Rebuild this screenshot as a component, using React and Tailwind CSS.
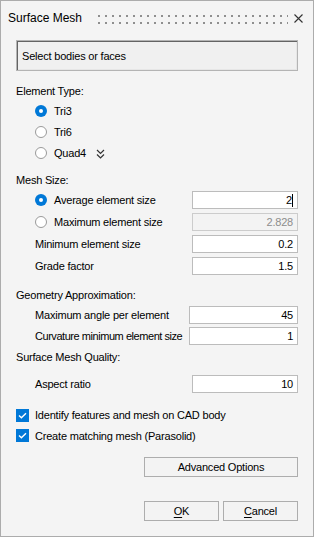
import { useState } from 'react';

const Radio = ({ checked }) => (
  <span
    className={
      checked
        ? 'w-[12px] h-[12px] rounded-full bg-[#0078d7] flex items-center justify-center shrink-0'
        : 'w-[12px] h-[12px] rounded-full border border-[#9a9a9a] bg-white shrink-0'
    }
  >
    {checked && <span className="w-[4px] h-[4px] rounded-full bg-white" />}
  </span>
);

const Check = () => (
  <span className="w-[13px] h-[13px] bg-[#0078d7] flex items-center justify-center shrink-0">
    <svg width="9" height="7" viewBox="0 0 9 7" fill="none">
      <path d="M1 3.5 L3.4 5.8 L8 1.2" stroke="white" strokeWidth="1.4" />
    </svg>
  </span>
);

const Field = ({ value, width = 'w-[106px]', disabled, caret }) => (
  <div
    className={
      'h-[18px] border flex items-center justify-end pr-[4px] shrink-0 ' +
      width +
      (disabled ? ' bg-[#f3f3f3] border-[#cccccc] text-[#8d8d8d]' : ' bg-white border-[#bcbcbc] text-black')
    }
  >
    <span>{value}</span>
    {caret && <span className="w-px h-[13px] bg-black" />}
  </div>
);

const Row = ({ h, label, indent = 'pl-[19px]', children }) => (
  <div className={'flex items-center justify-between ' + h}>
    <span className={'whitespace-nowrap ' + indent}>{label}</span>
    {children}
  </div>
);

const TitleDots = () => (
  <svg width="190" height="9" className="shrink-0">
    <defs>
      <pattern id="dots" width="7" height="7" patternUnits="userSpaceOnUse">
        <rect x="0" y="0" width="2" height="2" fill="#8f8f8f" />
      </pattern>
    </defs>
    <rect x="0" y="0" width="190" height="9" fill="url(#dots)" />
  </svg>
);

export default function App() {
  const [sel] = useState('tri3');
  return (
    <div className="w-[314px] h-[537px] bg-[#f4f4f4] border border-[#acacac] flex flex-col text-[11px] leading-[14px] text-black font-['Liberation_Sans',Arial,sans-serif] tracking-[-0.2px] select-none">
      <div className="h-[39px] flex items-start pt-[9px] pl-[7px] pr-[10px]">
        <span className="text-[12px] leading-[16px] tracking-normal">Surface Mesh</span>
        <div className="ml-[16px] mt-[5px]">
          <TitleDots />
        </div>
        <svg width="9" height="9" viewBox="0 0 9 9" className="ml-auto mt-[4px]">
          <path d="M0.5 0.5 L8.5 8.5 M8.5 0.5 L0.5 8.5" stroke="#333" strokeWidth="1.1" />
        </svg>
      </div>

      <div className="px-[15px] flex flex-col">
        <div className="h-[31px] border border-[#b4b4b4] bg-[#f0f0f0] shadow-[inset_1px_1px_0_#646464,inset_-1px_-1px_0_#e6e6e6] flex items-center pl-[5px]">
          Select bodies or faces
        </div>

        <div className="mt-[10px] h-[20px] flex items-center">Element Type:</div>
        <div className="h-[20px] flex items-center gap-[7px] pl-[19px]">
          <Radio checked={sel === 'tri3'} />
          <span>Tri3</span>
        </div>
        <div className="h-[21px] flex items-center gap-[7px] pl-[19px]">
          <Radio checked={sel === 'tri6'} />
          <span>Tri6</span>
        </div>
        <div className="h-[21px] flex items-center gap-[7px] pl-[19px]">
          <Radio checked={sel === 'quad4'} />
          <span>Quad4</span>
          <svg width="9" height="10" viewBox="0 0 9 10" className="ml-[3px] mt-[2px]">
            <path d="M1 1 L4.5 4.5 L8 1 M1 5.5 L4.5 9 L8 5.5" stroke="#333" strokeWidth="1.2" fill="none" />
          </svg>
        </div>

        <div className="mt-[7px] h-[19px] flex items-center">Mesh Size:</div>
        <div className="h-[22px] flex items-center justify-between">
          <div className="flex items-center gap-[7px] pl-[19px]">
            <Radio checked />
            <span>Average element size</span>
          </div>
          <Field value="2" caret />
        </div>
        <div className="h-[22px] flex items-center justify-between">
          <div className="flex items-center gap-[7px] pl-[19px]">
            <Radio />
            <span>Maximum element size</span>
          </div>
          <Field value="2.828" disabled />
        </div>
        <Row h="h-[22px]" label="Minimum element size">
          <Field value="0.2" />
        </Row>
        <Row h="h-[22px]" label="Grade factor">
          <Field value="1.5" />
        </Row>

        <div className="mt-[8px] h-[19px] flex items-center">Geometry Approximation:</div>
        <Row h="h-[21px]" label="Maximum angle per element">
          <Field value="45" width="w-[109px]" />
        </Row>
        <Row h="h-[22px] tracking-[-0.45px]" label="Curvature minimum element size">
          <Field value="1" width="w-[109px]" />
        </Row>
        <div className="h-[19px] flex items-center">Surface Mesh Quality:</div>
        <Row h="mt-[7px] h-[22px]" label="Aspect ratio">
          <Field value="10" />
        </Row>

        <div className="mt-[10px] h-[20px] flex items-center gap-[6px]">
          <Check />
          <span>Identify features and mesh on CAD body</span>
        </div>
        <div className="h-[21px] flex items-center gap-[6px]">
          <Check />
          <span>Create matching mesh (Parasolid)</span>
        </div>

        <div className="mt-[11px] flex justify-end">
          <button className="w-[154px] h-[20px] border border-[#adadad] bg-[#f3f3f3] flex items-center justify-center">
            Advanced Options
          </button>
        </div>
        <div className="mt-[24px] flex justify-end gap-[4px]">
          <button className="w-[75px] h-[20px] border border-[#adadad] bg-[#f3f3f3] flex items-center justify-center">
            <span className="underline underline-offset-2">O</span>K
          </button>
          <button className="w-[75px] h-[20px] border border-[#adadad] bg-[#f3f3f3] flex items-center justify-center">
            <span className="underline underline-offset-2">C</span>ancel
          </button>
        </div>
      </div>
    </div>
  );
}
